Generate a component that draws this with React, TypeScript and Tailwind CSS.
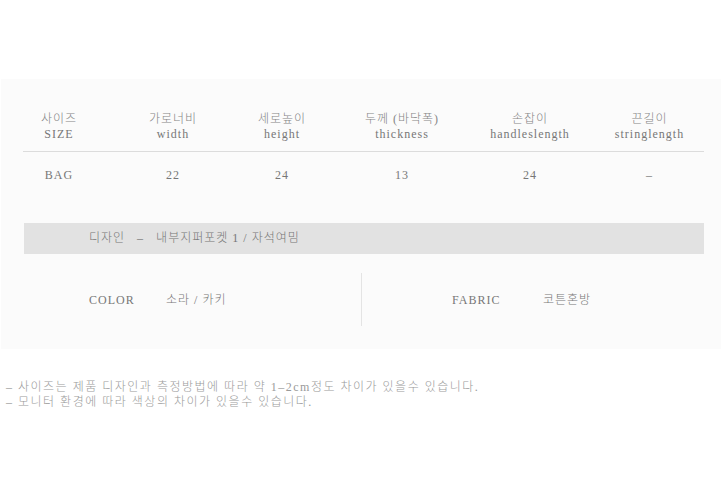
const font = { fontFamily: '"Liberation Serif", "Noto Sans CJK KR", serif' };

const heads = [
  { ko: "사이즈", en: "SIZE" },
  { ko: "가로너비", en: "width" },
  { ko: "세로높이", en: "height" },
  { ko: "두께 (바닥폭)", en: "thickness" },
  { ko: "손잡이", en: "handleslength" },
  { ko: "끈길이", en: "stringlength" },
];

const values = ["BAG", "22", "24", "13", "24", "–"];

export default function App() {
  return (
    <div className="min-h-[494px] w-[722px] bg-white pt-[79px] text-[12px] leading-[15px] font-light tracking-[1px] text-[#777]" style={font}>
      {/* 사이즈 표 */}
      <div className="ml-px mr-px bg-[#fbfbfb] px-[22px] pt-[33px] pb-[23px] pr-[17px]">
        <div className="grid grid-cols-[72px_156px_62px_178px_78px_1fr] border-b border-[#dcdcdc] pb-[9px]">
          {heads.map((h, i) => (
            <div key={h.en} className={`flex flex-col items-center whitespace-nowrap ${i === 5 ? "pl-[26px]" : ""}`}>
              <span className="text-[#858585]">{h.ko}</span>
              <span>{h.en}</span>
            </div>
          ))}
        </div>
        <div className="grid grid-cols-[72px_156px_62px_178px_78px_1fr] pt-[16px]">
          {values.map((v, i) => (
            <div key={i} className={`flex justify-center whitespace-nowrap ${i === 5 ? "pl-[26px]" : ""}`}>
              {v}
            </div>
          ))}
        </div>

        {/* 디자인 */}
        <div className="mt-[40px] ml-px flex h-[31px] items-center bg-[#e2e2e2] pl-[65px] whitespace-pre">
          디자인   –   내부지퍼포켓 1 / 자석여밈
        </div>

        {/* 컬러 / 소재 */}
        <div className="mt-[19px] flex">
          <div className="flex h-[53px] w-[339px] items-center border-r border-[#e4e4e4] pl-[66px] pt-[2px]">
            <span className="w-[77px]">COLOR</span>
            <span>소라 / 카키</span>
          </div>
          <div className="flex h-[53px] items-center pl-[90px] pt-[2px]">
            <span className="w-[91px]">FABRIC</span>
            <span>코튼혼방</span>
          </div>
        </div>
      </div>

      {/* 안내 */}
      <div className="mt-[31px] pl-[6px] tracking-[1.5px] text-[#9a9a9a]">
        <p>– 사이즈는 제품 디자인과 측정방법에 따라 약 1–2cm정도 차이가 있을수 있습니다.</p>
        <p>– 모니터 환경에 따라 색상의 차이가 있을수 있습니다.</p>
      </div>
    </div>
  );
}
